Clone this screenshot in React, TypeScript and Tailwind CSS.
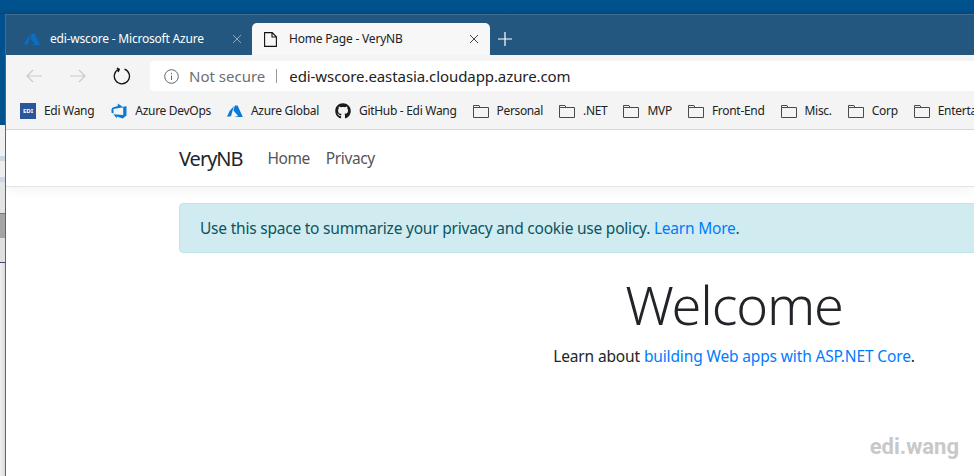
import React from "react";
import { FaGithub } from "react-icons/fa";

const sans = "font-['Noto_Sans','Open_Sans',sans-serif]";

function AzureLogo({ size = 16, color = "#0a6fc4" }: { size?: number; color?: string }) {
  return (
    <svg width={size} height={size * 0.8} viewBox="0 0 20 16" className="shrink-0">
      <path d="M9.8 0.5 L13.2 0.5 L20 15.5 L7 15.5 L14 13.6 L8 7 Z" fill={color} />
      <path d="M8.8 1.2 L3.2 7.5 L0 14.6 L5 14 L7 7 Z" fill={color} />
    </svg>
  );
}

function DevOps() {
  return (
    <svg width="16" height="16" viewBox="0 0 16 16" className="shrink-0">
      <path
        d="M15.5 3.2v9.3l-3.8 3.1-5.9-2.1v2.1L2.5 11.3l9.7.8V3.8zM12.3 4.3L6.8.5v2.6L1.7 4.6.5 6.2v3.5l2 .9V5.9z"
        fill="#0a78d4"
      />
    </svg>
  );
}

function Folder() {
  return (
    <svg width="16" height="13" viewBox="0 0 16 13" className="shrink-0" fill="none" stroke="#4a4a4a">
      <path d="M.5 2.5h15v10H.5zM.5 2.5V.5h5.5l1 2" />
    </svg>
  );
}

function Bookmark({ icon, label, gap = "gap-2" }: { icon: React.ReactNode; label: string; gap?: string }) {
  return (
    <div className={`flex items-center shrink-0 ${gap}`}>
      {icon}
      <span className="whitespace-nowrap">{label}</span>
    </div>
  );
}

export default function App() {
  return (
    <div className={`w-[974px] h-[476px] overflow-hidden flex flex-col bg-[#00528f] ${sans}`}>
      <div className="h-[14px] shrink-0 bg-gradient-to-b from-[#00528f] from-70% to-[#0a4677]" />
      <div className="flex flex-1 min-h-0">
        {/* Sliver of the window behind */}
        <div className="w-[5px] shrink-0 flex flex-col bg-[#e4e4e4] text-[12px] text-black overflow-hidden">
          <div className="h-[111px] bg-[#00528f]" />
          <div className="h-[31px] bg-[#f0f0f0]" />
          <div className="h-[5px] bg-[#ccd7e2]" />
          <div className="h-[16px] bg-[#eeeeee]" />
          <div className="h-[5px] bg-[#ccd7e2]" />
          <div className="h-[31px] bg-[#e4e4e4]" />
          <div className="h-[25px] bg-[#a6a4a6] border-t border-[#777]" />
          <div className="h-[25px] bg-[#e0e0e0] border-b border-[#46407a]" />
          <div className="flex-1 bg-gradient-to-r from-[#f0f0f0] to-[#dcdcdc]" />
        </div>
        {/* Browser window */}
        <div className="flex-1 min-w-0 flex flex-col border-l border-t border-[#3f6c93] bg-white overflow-hidden">
          {/* Tab strip */}
          <div className="h-[40px] shrink-0 bg-[#24577f] flex items-end text-[12px] tracking-[-0.2px]">
            <div className="w-[246px] h-[32px] shrink-0 flex items-center pl-[18px] text-white">
              <AzureLogo size={16} color="#0a6fc4" />
              <span className="ml-[10px] whitespace-nowrap">edi-wscore - Microsoft Azure</span>
              <svg width="10" height="10" viewBox="0 0 10 10" className="ml-auto mr-[10px]" stroke="#8fa9bf" strokeWidth="1">
                <path d="M1 1l8 8M9 1l-8 8" />
              </svg>
            </div>
            <div className="w-[238px] h-[32px] shrink-0 flex items-center pl-[12px] pr-[11px] bg-[#f7f7f7] rounded-t-[5px] text-[#222]">
              <svg width="13" height="15" viewBox="0 0 13 15" fill="none" stroke="#111" strokeWidth="1.1" className="shrink-0">
                <path d="M.6.6h7.6l4.2 4.2v9.6H.6zM8 .6v4.4h4.4" />
              </svg>
              <span className="ml-[12px] whitespace-nowrap">Home Page - VeryNB</span>
              <svg width="10" height="10" viewBox="0 0 10 10" className="ml-auto" stroke="#444" strokeWidth="1">
                <path d="M1 1l8 8M9 1l-8 8" />
              </svg>
            </div>
            <div className="h-[32px] flex items-center pl-[8px]">
              <svg width="14" height="14" viewBox="0 0 14 14" stroke="#fff" strokeWidth="1.2">
                <path d="M7 0v14M0 7h14" />
              </svg>
            </div>
          </div>
          {/* Address row */}
          <div className="h-[36px] shrink-0 bg-[#f4f4f4] flex items-center pt-[6px]">
            <div className="w-[144px] shrink-0 flex items-center pl-[20px] h-full">
              <svg width="16" height="14" viewBox="0 0 16 14" fill="none" stroke="#c9c9c9" strokeWidth="1.1">
                <path d="M16 7H1M7 1L1 7l6 6" />
              </svg>
              <svg width="16" height="14" viewBox="0 0 16 14" fill="none" stroke="#c9c9c9" strokeWidth="1.1" className="ml-[28px]">
                <path d="M0 7h15M9 1l6 6-6 6" />
              </svg>
              <svg width="18" height="18" viewBox="0 0 18 18" fill="none" stroke="#111" strokeWidth="1.3" className="ml-[27px]">
                <path d="M11.5 2.1A7.6 7.6 0 1 1 6 2.2M3.8 1l2.5 1.3-1.2 2.7" />
              </svg>
            </div>
            <div className="flex-1 h-[30px] bg-white rounded-l-[4px] flex items-center pl-[14px] text-[15px]">
              <svg width="15" height="15" viewBox="0 0 15 15" fill="none" stroke="#666" className="shrink-0">
                <circle cx="7.5" cy="7.5" r="6.8" />
                <path d="M7.5 6.5v4.5M7.5 3.8v1.4" />
              </svg>
              <span className="ml-[10px] text-[#6e6e6e] whitespace-nowrap">Not secure</span>
              <span className="ml-[11px] w-px h-[14px] bg-[#9a9a9a]" />
              <span className="ml-[12px] text-[#222] whitespace-nowrap tracking-[-0.08px]">edi-wscore.eastasia.cloudapp.azure.com</span>
            </div>
          </div>
          {/* Bookmarks */}
          <div className="h-[39px] shrink-0 bg-[#f4f4f4] border-b border-[#d6d6d6] flex items-center pl-[14px] pt-[2px] text-[12px] tracking-[-0.3px] text-[#222] overflow-hidden">
            <Bookmark
              icon={
                <span className="w-4 h-4 bg-[#2b579a] text-white text-[6px] font-bold tracking-normal flex items-center justify-center">EDI</span>
              }
              label="Edi Wang"
            />
            <div className="ml-[17px]">
              <Bookmark icon={<DevOps />} label="Azure DevOps" />
            </div>
            <div className="ml-[16px]">
              <Bookmark icon={<AzureLogo size={16} color="#0a78d4" />} label="Azure Global" />
            </div>
            <div className="ml-[16px]">
              <Bookmark icon={<FaGithub size={16} color="#1b1b1b" />} label="GitHub - Edi Wang" />
            </div>
            <div className="ml-[16px] flex items-center gap-4">
              <div className="tracking-[-0.35px]">
                <Bookmark icon={<Folder />} label="Personal" />
              </div>
              <Bookmark icon={<Folder />} label=".NET" />
              <Bookmark icon={<Folder />} label="MVP" />
              <Bookmark icon={<Folder />} label="Front-End" />
              <Bookmark icon={<Folder />} label="Misc." />
              <Bookmark icon={<Folder />} label="Corp" />
              <Bookmark icon={<Folder />} label="Entertainment" />
            </div>
          </div>
          {/* Page */}
          <div className="flex-1 min-h-0 relative overflow-hidden bg-white">
            <div className="h-[57px] border-b border-[#e5e5e5] shadow-[0_2px_12px_rgba(0,0,0,0.06)] flex items-center pl-[173px] pt-[2px] text-[#212529]">
              <span className="text-[20px] tracking-[-1px]">VeryNB</span>
              <span className="ml-[25px] text-[15.5px] tracking-[-0.45px] text-[#555]">Home</span>
              <span className="ml-[16px] text-[15.5px] tracking-[-0.4px] text-[#555]">Privacy</span>
            </div>
            <div className="w-[1140px] ml-[158px] px-[15px] pt-4">
              <div className="h-[50px] flex items-center px-[20px] pt-[2px] bg-[#d1ecf1] border border-[#bee5eb] rounded-[4px] text-[#0c5460] text-[15.5px] tracking-[-0.22px] whitespace-nowrap">
                <span>
                  Use this space to summarize your privacy and cookie use policy.{" "}
                  <span className="text-[#007bff]">Learn More</span>.
                </span>
              </div>
              <div className="text-center text-[#212529]">
                <h1 className="text-[54px] font-light leading-[67px] mt-[18px] tracking-[-1.15px]">Welcome</h1>
                <p className="text-[15.5px] tracking-[-0.14px] mt-[7px]">
                  Learn about <span className="text-[#007bff]">building Web apps with ASP.NET Core</span>.
                </p>
              </div>
            </div>
            <span className="absolute right-[15px] bottom-[13px] text-[22px] font-bold text-[#c8c8c8] font-['Roboto',sans-serif]">edi.wang</span>
          </div>
        </div>
      </div>
    </div>
  );
}
